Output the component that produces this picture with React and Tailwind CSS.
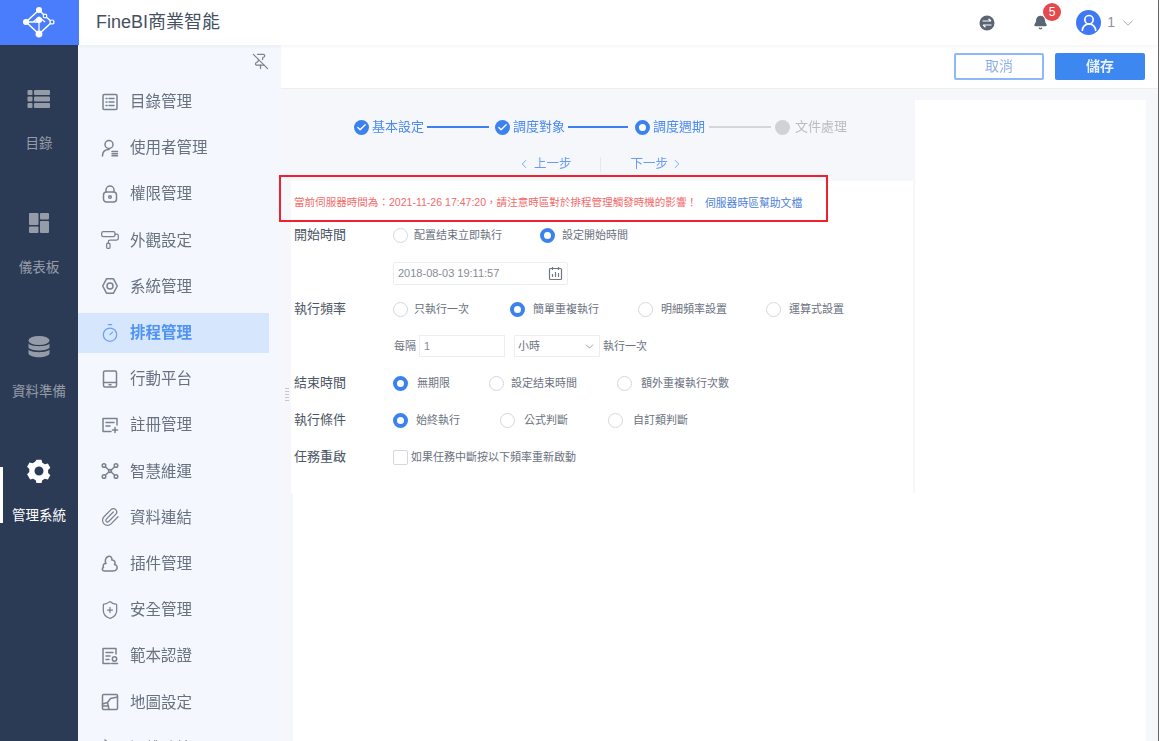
import React from "react";
import { PinOff, PaintRoller, Timer, Paperclip, ShieldPlus, ChevronLeft, ChevronRight, ChevronDown, Check, Bell, UserRound } from "lucide-react";

const S = ({ children }) => (
  <svg width="20" height="20" viewBox="0 0 20 20" fill="none" stroke="currentColor" strokeWidth="1.5" strokeLinecap="round" strokeLinejoin="round">{children}</svg>
);

const menu = [
  ["目錄管理", <S><rect x="3" y="2.5" width="14" height="15" rx="1" /><path d="M6 6.5h1M9 6.5h5M6 10h1M9 10h5M6 13.5h1M9 13.5h5" /></S>],
  ["使用者管理", <S><circle cx="9" cy="6.5" r="4" /><path d="M2.5 18c0-4 2.5-6.5 6.5-6.5M12 13.5h5.5M12 15.7h5.5M12 17.8h5.5" /></S>],
  ["權限管理", <S><path d="M6 8V6a4 4 0 018 0v2" /><rect x="3.5" y="8" width="13" height="10" rx="3" /><circle cx="10" cy="13" r="1.3" /></S>],
  ["外觀設定", <PaintRoller size={20} strokeWidth={1.5} />],
  ["系統管理", <S><path d="M6.5 2.8h7l3.8 7.2-3.8 7.2h-7L2.7 10z" /><circle cx="10" cy="10" r="3" /></S>],
  ["排程管理", <Timer size={20} strokeWidth={1.5} />],
  ["行動平台", <S><rect x="3.5" y="2" width="13" height="16" rx="1.5" /><path d="M3.5 13.5h13M9 15.8h2" /></S>],
  ["註冊管理", <S><path d="M17 10V3.5H3v13h8" /><path d="M6 7.5h8M6 11h4M15 12.5v5M12.5 15h5" /></S>],
  ["智慧維運", <S><circle cx="4" cy="4.5" r="1.8" /><circle cx="16" cy="4.5" r="1.8" /><circle cx="4" cy="15.5" r="1.8" /><circle cx="16" cy="15.5" r="1.8" /><circle cx="10" cy="10" r="1.5" /><path d="M5.5 6l3.4 3M14.5 6l-3.4 3M5.5 14l3.4-3M14.5 14l-3.4-3" /></S>],
  ["資料連結", <Paperclip size={20} strokeWidth={1.5} />],
  ["插件管理", <S><path d="M8 2.5c2.500-1 4.500 1 3.800 3.500 2.700-.2 4.200 2.300 2.700 4.500 2.500.5 3.500 3 2 5-.8 1-2 1.500-3.500 1.500H4.500c-2.500 0-3-2.800-1-3.500-1.200-2.200.3-4.200 2.500-4C4.500 7 5.500 3.500 8 2.500z" /></S>],
  ["安全管理", <ShieldPlus size={20} strokeWidth={1.5} />],
  ["範本認證", <S><path d="M16 8V2.500H3v15h7" /><path d="M6 6.500h7M6 10h4M6 13.500h3" /><circle cx="14.500" cy="13" r="2.200" /><path d="M11.500 17.500h6" /></S>],
  ["地圖設定", <S><rect x="2.500" y="2.500" width="15" height="15" rx="1" /><path d="M2.500 12l5-1.500 3-4 7-1.500M7.500 10.500l1.500 7M2.500 14h6" /></S>],
  ["運維監控", <S><path d="M5 2l8 7-4 1 3 6" /></S>],
];

const rail = [
  ["目錄", <svg width="24" height="24" viewBox="0 0 24 24" fill="currentColor"><rect x="0.500" y="3" width="5" height="5" rx="1" /><rect x="7" y="3" width="16" height="5" rx="1" /><rect x="0.500" y="9.500" width="5" height="5" rx="1" /><rect x="7" y="9.500" width="16" height="5" rx="1" /><rect x="0.500" y="16" width="5" height="5" rx="1" /><rect x="7" y="16" width="16" height="5" rx="1" /></svg>],
  ["儀表板", <svg width="24" height="24" viewBox="0 0 24 24" fill="currentColor"><rect x="2" y="2" width="9.500" height="12" rx="1" /><rect x="13" y="2" width="9" height="6.500" rx="1" /><rect x="2" y="15.500" width="9.500" height="6.500" rx="1" /><rect x="13" y="10" width="9" height="12" rx="1" /></svg>],
  ["資料準備", <svg width="24" height="24" viewBox="0 0 24 24" fill="currentColor"><ellipse cx="12" cy="5.500" rx="10.500" ry="4.500" /><path d="M1.500 8.500c2 3.500 19 3.500 21 0v4c-2 4-19 4-21 0z" /><path d="M1.500 14.500c2 3.500 19 3.500 21 0v4c-2 5-19 5-21 0z" /></svg>],
];

const Radio = ({ on }) =>
  on ? (
    <span className="block w-[15px] h-[15px] rounded-full border-[4.500px] border-[#3b82f0] bg-white shrink-0" />
  ) : (
    <span className="block w-[15px] h-[15px] rounded-full border border-[#d4d7dd] bg-white shrink-0" />
  );

const Opt = ({ on, label, w, gap }) => (
  <div className={`flex items-center ${w}`}>
    <Radio on={on} />
    <span className={`${gap} text-[11px] text-[#6b7280] whitespace-nowrap`}>{label}</span>
  </div>
);

const Row = ({ label, children, top }) => (
  <div className={`flex items-center h-5 ${top}`}>
    <span className="w-[99px] text-[13px] text-[#4b5563] shrink-0">{label}</span>
    {children}
  </div>
);

const CheckDot = ({ ml }) => (
  <span className={`w-[15px] h-[15px] rounded-full bg-[#3b82f0] flex items-center justify-center shrink-0 ${ml}`}>
    <Check size={11} strokeWidth={3} className="text-white" />
  </span>
);

export default function App() {
  return (
    <div className="w-[1160px] h-[741px] overflow-hidden flex bg-white" style={{ fontFamily: '"Liberation Sans","Noto Sans CJK TC",sans-serif' }}>
      <div className="w-[1158px] h-full flex flex-col">
        {/* header */}
        <header className="h-[45px] shrink-0 flex items-center bg-white relative z-10 shadow-[0_1px_4px_rgba(0,0,0,0.05)]">
          <div className="w-[79px] h-full bg-[#4a7dfb]">
            <svg width="79" height="45" viewBox="0 0 79 45" fill="none" stroke="white" strokeWidth="1.500">
              <path d="M39 10L26 22l13 12 13-12-7-6-6-6" />
              <path d="M26 22l13 0 0 12M33 22l6-5 6 5" strokeWidth="1.300" />
              <circle cx="39" cy="10" r="2.300" fill="white" />
              <circle cx="26" cy="22" r="2.300" fill="white" />
              <circle cx="39" cy="34" r="2.700" fill="white" />
              <circle cx="39" cy="20" r="2.300" fill="white" />
              <circle cx="45" cy="16" r="1.800" fill="#4a7dfb" strokeWidth="1.200" />
              <circle cx="52" cy="22" r="2" fill="#4a7dfb" strokeWidth="1.200" />
            </svg>
          </div>
          <span className="ml-[17px] text-[18px] text-[#44505f]">FineBI商業智能</span>
          <div className="ml-auto flex items-center">
            <svg width="16" height="16" viewBox="0 0 16 16" fill="none">
              <circle cx="8" cy="8" r="7.500" fill="#5b6472" />
              <path d="M3.500 6h8.500M9.500 3.800L12 6M12.500 10H4M6.500 12.200L4 10" stroke="white" strokeWidth="1.200" />
            </svg>
            <span className="relative ml-[38px] flex">
              <Bell size={15} fill="#5b6472" className="text-[#5b6472]" />
              <span className="absolute -top-[12px] left-[10px] w-[18px] h-[18px] rounded-full bg-[#e5484d] text-white text-[12px] flex items-center justify-center">5</span>
            </span>
            <span className="ml-[28px] w-[25px] h-[25px] rounded-full bg-[#3f78f2] flex items-center justify-center overflow-hidden">
              <UserRound size={20} strokeWidth={2} className="text-white" />
            </span>
            <span className="ml-[6px] text-[14px] text-[#8b929c]">1</span>
            <ChevronDown size={18} strokeWidth={1.250} className="ml-[4px] mr-[21px] text-[#a2a8b1]" />
          </div>
        </header>

        <div className="flex-1 flex min-h-0">
          {/* rail */}
          <nav className="w-[78px] shrink-0 bg-[#2c3b55] flex flex-col">
            {rail.map(([t, icon]) => (
              <div key={t} className="h-[124px] shrink-0 flex flex-col items-center pt-[42px] text-[#959ca8]">
                {icon}
                <span className="mt-[23px] text-[13.500px] leading-5 whitespace-nowrap">{t}</span>
              </div>
            ))}
            <div className="relative h-[124px] shrink-0 flex flex-col items-center pt-[42px] text-white">
              <span className="absolute left-0 top-[50px] w-[3px] h-[56px] bg-white" />
              <svg width="24" height="24" viewBox="0 0 24 24" fill="white">
                <path fillRule="evenodd" d="M9.500 0.800h5l.800 3 2.600 1.500 3-.8 2.400 4.300-2.200 2.200v3l2.200 2.200-2.400 4.300-3-.8-2.600 1.500-.8 3h-5l-.8-3-2.600-1.500-3 .8L.100 15.200l2.200-2.200v-3L.100 7.800l2.400-4.300 3 .8 2.600-1.500zM12 7.500a4.500 4.500 0 100 9 4.500 4.500 0 000-9z" />
              </svg>
              <span className="mt-[23px] text-[13.500px] leading-5 whitespace-nowrap">管理系統</span>
            </div>
          </nav>

          {/* menu */}
          <aside className="w-[203px] shrink-0 bg-[#f4f7fe] flex flex-col overflow-hidden blur-[0.600px]">
            <div className="h-[33.600px] shrink-0 flex items-center justify-end pr-[12px] text-[#7b838f]">
              <PinOff size={17} strokeWidth={1.750} />
            </div>
            {menu.map(([t, icon]) => {
              const on = t === "排程管理";
              return (
                <div key={t} className="h-[46.200px] shrink-0 flex items-center">
                  <div className={`w-[191px] h-[40px] flex items-center pl-[22px] ${on ? "bg-[#d6e6fc] text-[#4f93f5] font-bold" : "text-[#687180]"}`}>
                    <span className={`w-5 h-5 flex items-center justify-center shrink-0 ${on ? "text-[#6aa3f5]" : "text-[#7a828f]"}`}>{icon}</span>
                    <span className="ml-[10px] text-[15.500px] whitespace-nowrap">{t}</span>
                  </div>
                </div>
              );
            })}
          </aside>

          {/* main */}
          <main className="relative flex-1 flex flex-col bg-[#f6f7fa] min-w-0">
            <div className="h-[44px] shrink-0 bg-white border-b border-[#eceef1] flex items-center justify-end gap-[11px] pr-[13px] blur-[0.400px]">
              <button className="w-[90px] h-[27px] bg-white border-2 border-[#8fb8fa] rounded-[2px] text-[14px] text-[#8fb0ee]">取消</button>
              <button className="w-[90px] h-[27px] bg-[#3c87f0] rounded-[2px] text-[14px] font-bold text-[#e8f0fd]">儲存</button>
            </div>

            <div className="flex h-[404px] shrink-0 pl-[10px] pr-[12px]">
              <div className="relative w-[622px] shrink-0 flex flex-col">
                <div className="flex-1 flex flex-col blur-[0.700px]">
                  <div className="h-[92px] shrink-0 pt-[28px]">
                    <div className="flex items-center h-5 pl-[63px] text-[13px] whitespace-nowrap text-[#4a8af0]">
                      <CheckDot />
                      <span className="ml-[3px]">基本設定</span>
                      <span className="ml-[3px] w-[62px] h-[2px] bg-[#3b82f0]" />
                      <CheckDot ml="ml-[6px]" />
                      <span className="ml-[3px]">調度對象</span>
                      <span className="ml-[3px] w-[60px] h-[2px] bg-[#3b82f0]" />
                      <span className="ml-[7px] shrink-0"><Radio on /></span>
                      <span className="ml-[3px]">調度週期</span>
                      <span className="ml-[4px] w-[62px] h-[2px] bg-[#d3d6db]" />
                      <span className="ml-[4px] w-[15px] h-[15px] rounded-full bg-[#cfd2d7]" />
                      <span className="ml-[5px] text-[#b9bcc2]">文件處理</span>
                    </div>
                    <div className="mt-[18px] flex items-center h-[18px] text-[12.500px] text-[#6a9cf5] pl-[226px]">
                      <ChevronLeft size={14} strokeWidth={1.500} />
                      <span className="ml-[3px] whitespace-nowrap">上一步</span>
                      <span className="ml-[28px] w-px h-[15px] bg-[#e6e8ec]" />
                      <span className="ml-[30px] whitespace-nowrap">下一步</span>
                      <ChevronRight size={14} strokeWidth={1.500} className="ml-[2px]" />
                    </div>
                  </div>

                  <div className="flex-1 bg-white pl-[3px]">
                    <div className="h-[44px] flex items-center whitespace-nowrap">
                      <span className="text-[10.550px] text-[#f26b6b]">當前伺服器時間為：2021-11-26 17:47:20，請注意時區對於排程管理觸發時機的影響！</span>
                      <span className="ml-[8px] text-[10.800px] text-[#4a80d8]">伺服器時區幫助文檔</span>
                    </div>

                    <Row label="開始時間">
                      <Opt label="配置结束立即執行" w="w-[147px]" gap="ml-[6px]" />
                      <Opt on label="設定開始時間" w="w-[120px]" gap="ml-[7px]" />
                    </Row>
                    <div className="ml-[99px] mt-[17px] w-[175px] h-[23px] border border-[#eceef1] rounded-[2px] flex items-center justify-between px-[4px]">
                      <span className="text-[11px] text-[#858b95]">2018-08-03 19:11:57</span>
                      <svg width="15" height="15" viewBox="0 0 15 15" fill="none" stroke="#6f7783" strokeWidth="1.200">
                        <rect x="1.500" y="2.500" width="12" height="11" rx="1" />
                        <path d="M4.500 1v3M10.500 1v3M4.500 8v3M7.500 6v5M10.500 7v4" />
                      </svg>
                    </div>

                    <Row label="執行頻率" top="mt-[14px]">
                      <Opt label="只執行一次" w="w-[117px]" gap="ml-[6px]" />
                      <Opt on label="簡單重複執行" w="w-[128px]" gap="ml-[8px]" />
                      <Opt label="明細頻率設置" w="w-[128px]" gap="ml-[8px]" />
                      <Opt label="運算式設置" w="w-[100px]" gap="ml-[8px]" />
                    </Row>
                    <div className="ml-[99px] mt-[16px] h-[22px] flex items-center text-[11px] text-[#6b7280]">
                      <span className="ml-[1px] whitespace-nowrap">每隔</span>
                      <span className="ml-[3px] w-[86px] h-full border border-[#eceef1] flex items-center pl-[4px] text-[#858b95]">1</span>
                      <span className="ml-[9px] w-[86px] h-full border border-[#eceef1] flex items-center justify-between px-[3px]">
                        小時
                        <ChevronDown size={13} strokeWidth={1.500} className="text-[#7d8590]" />
                      </span>
                      <span className="ml-[3px] whitespace-nowrap">執行一次</span>
                    </div>

                    <Row label="結束時間" top="mt-[16px]">
                      <Opt on label="無期限" w="w-[96px]" gap="ml-[9px]" />
                      <Opt label="設定结束時間" w="w-[128px]" gap="ml-[7px]" />
                      <Opt label="額外重複執行次數" w="w-[110px]" gap="ml-[9px]" />
                    </Row>
                    <Row label="執行條件" top="mt-[17px]">
                      <Opt on label="始終執行" w="w-[107px]" gap="ml-[8px]" />
                      <Opt label="公式判斷" w="w-[108px]" gap="ml-[9px]" />
                      <Opt label="自訂類判斷" w="w-[90px]" gap="ml-[10px]" />
                    </Row>
                    <Row label="任務重啟" top="mt-[17px]">
                      <span className="w-[15px] h-[15px] border border-[#d4d7dd] rounded-[2px] shrink-0" />
                      <span className="ml-[3px] text-[11px] text-[#6b7280] whitespace-nowrap">如果任務中斷按以下頻率重新啟動</span>
                    </Row>
                  </div>
                </div>

                {/* annotation box */}
                <div className="absolute -left-[12px] top-[86px] w-[549px] h-[47px] border-2 border-[#f0202f]" />
              </div>
              <div className="mt-[11px] ml-[2px] w-[231px] shrink-0 bg-white" />
            </div>

            <div className="flex-1 ml-[12px] mr-[12px] bg-white" />

            <div className="absolute left-[4px] top-[343px] w-[4px] h-[14px] bg-[repeating-linear-gradient(to_bottom,#c4c8ce_0,#c4c8ce_1px,transparent_1px,transparent_3px)]" />
          </main>
        </div>
      </div>
      <div className="w-px h-full bg-[#666]" />
    </div>
  );
}
